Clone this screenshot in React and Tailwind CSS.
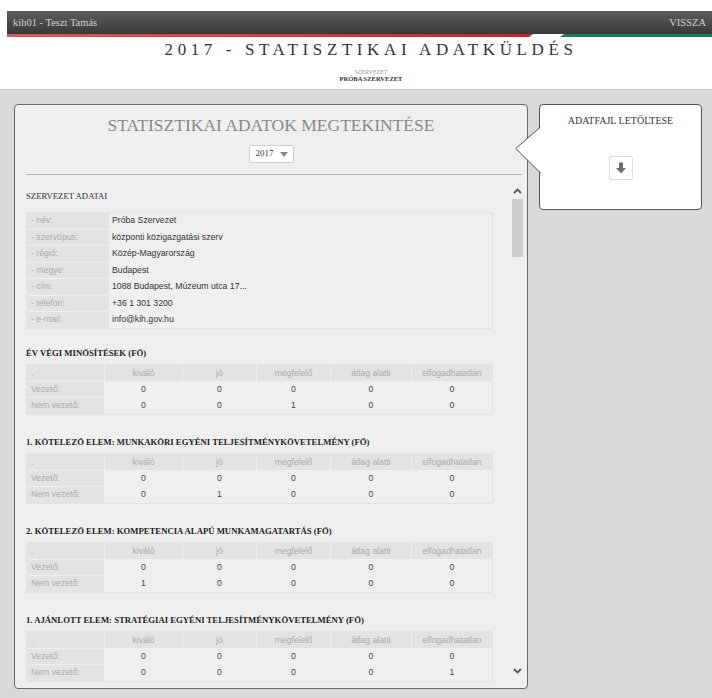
import React from "react";

const cols = ["kiváló", "jó", "megfelelő", "átlag alatti", "elfogadhatatlan"];

const sections = [
  { title: "ÉV VÉGI MINŐSÍTÉSEK (FŐ)", rows: [[0, 0, 0, 0, 0], [0, 0, 1, 0, 0]] },
  { title: "1. KÖTELEZŐ ELEM: MUNKAKÖRI EGYÉNI TELJESÍTMÉNYKÖVETELMÉNY (FŐ)", rows: [[0, 0, 0, 0, 0], [0, 1, 0, 0, 0]] },
  { title: "2. KÖTELEZŐ ELEM: KOMPETENCIA ALAPÚ MUNKAMAGATARTÁS (FŐ)", rows: [[0, 0, 0, 0, 0], [1, 0, 0, 0, 0]] },
  { title: "1. AJÁNLOTT ELEM: STRATÉGIAI EGYÉNI TELJESÍTMÉNYKÖVETELMÉNY (FŐ)", rows: [[0, 0, 0, 0, 0], [0, 0, 0, 0, 1]] },
];

const org = [
  ["- név:", "Próba Szervezet"],
  ["- szervtípus:", "központi közigazgatási szerv"],
  ["- régió:", "Közép-Magyarország"],
  ["- megye:", "Budapest"],
  ["- cím:", "1088 Budapest, Múzeum utca 17..."],
  ["- telefon:", "+36 1 301 3200"],
  ["- e-mail:", "info@kih.gov.hu"],
];

function Chevron({ up }) {
  return (
    <svg width="9" height="6" viewBox="0 0 9 6">
      <path
        d={up ? "M1 5 L4.5 1.5 L8 5" : "M1 1 L4.5 4.5 L8 1"}
        fill="none"
        stroke="#555"
        strokeWidth="1.8"
      />
    </svg>
  );
}

function StatTable({ rows }) {
  return (
    <div className="grid w-[467px] grid-cols-[77px_77px_73px_73px_80px_80px] gap-[1px] border border-[#e3e3e3] font-['Liberation_Sans',Arial,sans-serif] text-[8.7px]">
      <div className="h-[16px] bg-[#e3e3e3] pl-[4px] leading-[16px] text-[#aaa]">.</div>
      {cols.map((c) => (
        <div key={c} className="h-[16px] bg-[#e3e3e3] text-center leading-[16px] text-[#aaa]">
          {c}
        </div>
      ))}
      {rows.map((r, i) => (
        <React.Fragment key={i}>
          <div className="h-[15.5px] bg-[#e3e3e3] pl-[4px] leading-[15.5px] text-[#aaa]">
            {i === 0 ? "Vezető:" : "Nem vezető:"}
          </div>
          {r.map((v, j) => (
            <div key={j} className="h-[15.5px] text-center leading-[15.5px] text-[#444]">
              {v}
            </div>
          ))}
        </React.Fragment>
      ))}
    </div>
  );
}

function DownloadArrow() {
  return (
    <svg width="10" height="12" viewBox="0 0 10 12">
      <rect x="3" y="0.5" width="4" height="6" fill="#707070" />
      <path d="M0 6 L10 6 L5 11.5 Z" fill="#707070" />
    </svg>
  );
}

export default function App() {
  return (
    <div className="relative h-[698px] w-[712px] overflow-hidden bg-white font-['Liberation_Serif',serif]">
      {/* top bar with the flag stripe */}
      <div className="pl-[7px] pt-[11px]">
        <div className="flex h-[23px] items-center justify-between bg-gradient-to-b from-[#5e5e5e] to-[#383838] pl-[6px] pr-[6px] text-[10.5px] text-[#cfcfcf]">
          <span>kih01 - Teszt Tamás</span>
          <span>VISSZA</span>
        </div>
        <div className="flex h-[3px]">
          <div className="w-[526px] bg-gradient-to-r from-[#d45a62] to-[#c1232c] [clip-path:polygon(0_0,100%_0,calc(100%-4px)_100%,0_100%)]" />
          <div className="w-[27px]" />
          <div className="flex-1 bg-[#1f7b57] [clip-path:polygon(4px_0,100%_0,100%_100%,0_100%)]" />
        </div>
      </div>

      {/* page title */}
      <div className="flex h-[52px] flex-col items-center pl-[30px] pt-[3px]">
        <div className="text-[17px] leading-[20px] tracking-[4.6px] text-[#333]">
          2017 - STATISZTIKAI ADATKÜLDÉS
        </div>
        <div className="mt-[9px] text-[6px] leading-[6px] text-[#999]">SZERVEZET</div>
        <div className="text-[6.5px] font-bold leading-[7px] text-[#333]">PRÓBA SZERVEZET</div>
      </div>

      {/* grey work area */}
      <div className="h-[620px] border-t border-[#c4c4c4] bg-[#d9d9d9] pt-[14px]">
        <div className="ml-[14px] flex h-[585px] w-[514px] flex-col rounded-[4px] border border-[#686868] bg-[#efefef]">
          <div className="pt-[9px] text-center text-[17.5px] leading-[22px] text-[#888]">
            STATISZTIKAI ADATOK MEGTEKINTÉSE
          </div>
          <div className="mt-[9px] flex justify-center">
            <div className="flex h-[18px] w-[45px] items-center justify-between rounded-[2px] border border-[#cfcfcf] bg-white pl-[6px] pr-[5px] text-[9px] text-[#333]">
              <span>2017</span>
              <svg width="8" height="5" viewBox="0 0 8 5">
                <path d="M0 0 L8 0 L4 5 Z" fill="#888" />
              </svg>
            </div>
          </div>
          <div className="ml-[11px] mr-[5px] mt-[11px] h-px bg-[#b3b3b3]" />

          {/* scrolling content */}
          <div className="flex min-h-0 flex-1">
            <div className="ml-[11px] w-[467px] overflow-hidden pt-[15px]">
              <div className="text-[8.7px] leading-[12px] text-[#333]">SZERVEZET ADATAI</div>
              <div className="mt-[10px] grid grid-cols-[82px_1fr] gap-x-[1px] gap-y-[1px] border border-[#e3e3e3] font-['Liberation_Sans',Arial,sans-serif] text-[8.7px]">
                {org.map(([k, v]) => (
                  <React.Fragment key={k}>
                    <div className="h-[15.5px] bg-[#e3e3e3] pl-[4px] leading-[15.5px] text-[#aaa]">{k}</div>
                    <div className="h-[15.5px] pl-[2px] leading-[15.5px] text-[#333]">{v}</div>
                  </React.Fragment>
                ))}
              </div>

              {sections.map((s, i) => (
                <div key={s.title} className={i === 0 ? "mt-[18px]" : "mt-[21px]"}>
                  <div className="mb-[5px] text-[8.7px] font-bold leading-[12px] text-[#222]">{s.title}</div>
                  <StatTable rows={s.rows} />
                </div>
              ))}
            </div>

            {/* scrollbar */}
            <div className="ml-[15px] flex w-[18px] flex-col items-center pb-[14px] pt-[13px]">
              <Chevron up />
              <div className="mt-[5px] h-[58px] w-[11px] bg-[#cdcdcd]" />
              <div className="flex-1" />
              <Chevron />
            </div>
          </div>
        </div>
      </div>

      {/* download callout */}
      <div className="absolute left-[539px] top-[104px] flex h-[106px] w-[163px] flex-col items-center rounded-[4px] border border-[#555] bg-white">
        <svg className="absolute left-[-25px] top-[22px]" width="26" height="47" viewBox="0 0 26 47">
          <polygon points="26,0 0.8,21.5 26,46" fill="white" />
          <path d="M25.5 0 L0.8 21.5 L25.5 46" fill="none" stroke="#555" strokeWidth="1" />
        </svg>
        <div className="pt-[10px] text-[10px] leading-[12px] text-[#333]">ADATFAJL LETÖLTESE</div>
        <div className="mt-[29px] flex h-[24px] w-[24px] items-center justify-center rounded-[2px] border border-[#dcdcdc] bg-white">
          <DownloadArrow />
        </div>
      </div>
    </div>
  );
}
